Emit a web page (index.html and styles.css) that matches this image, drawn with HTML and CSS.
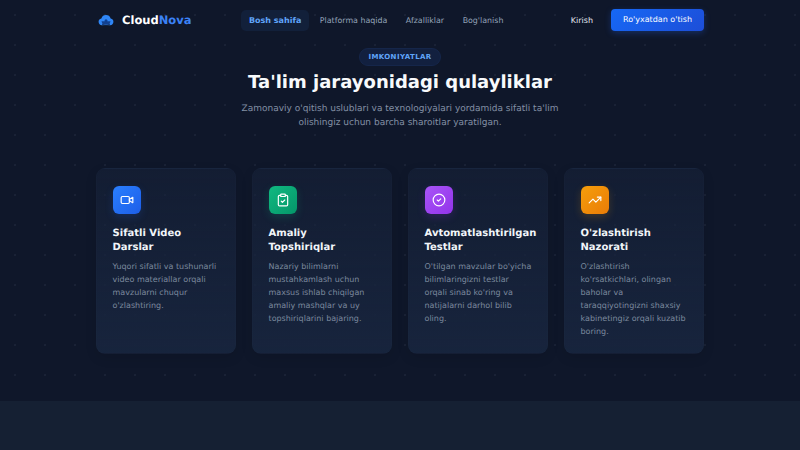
FILE: index.html
```html
<!DOCTYPE html>
<html lang="uz">
<head>
  <meta charset="UTF-8" />
  <meta name="viewport" content="width=device-width, initial-scale=1.0" />
  <title>CloudNova</title>
  <link rel="stylesheet" href="styles.css">
</head>
<body>
  <div class="page">
    <header class="navbar">
      <a class="logo" href="#">
        <svg class="logo-icon" viewBox="0 0 24 24" width="18" height="18">
          <path fill="#2f86f6" d="M6.5 19a4.6 4.6 0 0 1-.7-9.1 6.5 6.5 0 0 1 12.4 0 4.6 4.6 0 0 1-.7 9.1z"/>
          <path fill="#12408f" d="M6 13.5h12l-1.5 4.5h-9z"/>
          <circle cx="12" cy="13" r="2" fill="#0b3f94"/>
          <path fill="none" stroke="#0d1628" stroke-width="1" d="M7 18c3 1.5 7 1.5 10 0"/>
        </svg>
        <span>Cloud<em>Nova</em></span>
      </a>
      <nav class="menu">
        <a class="menu-item active" href="#">Bosh sahifa</a>
        <a class="menu-item" href="#">Platforma haqida</a>
        <a class="menu-item" href="#">Afzalliklar</a>
        <a class="menu-item" href="#">Bog'lanish</a>
      </nav>
      <div class="actions">
        <a class="login" href="#">Kirish</a>
        <a class="signup" href="#">Ro'yxatdan o'tish</a>
      </div>
    </header>

    <section class="features">
      <div class="features-head">
        <span class="badge">IMKONIYATLAR</span>
        <h1>Ta'lim jarayonidagi qulayliklar</h1>
        <p>Zamonaviy o'qitish uslublari va texnologiyalari yordamida sifatli ta'lim olishingiz uchun barcha sharoitlar yaratilgan.</p>
      </div>

      <div class="cards">
        <div class="card">
          <div class="icon icon-blue">
            <svg viewBox="0 0 24 24" width="14" height="14"><path d="m16 13 5.2 3.5a.5.5 0 0 0 .8-.4V7.9a.5.5 0 0 0-.8-.4L16 11"/><rect x="2" y="6" width="14" height="12" rx="2"/></svg>
          </div>
          <h3>Sifatli Video Darslar</h3>
          <p>Yuqori sifatli va tushunarli video materiallar orqali mavzularni chuqur o'zlashtiring.</p>
        </div>
        <div class="card">
          <div class="icon icon-green">
            <svg viewBox="0 0 24 24" width="14" height="14"><rect x="8" y="2" width="8" height="4" rx="1"/><path d="M16 4h2a2 2 0 0 1 2 2v14a2 2 0 0 1-2 2H6a2 2 0 0 1-2-2V6a2 2 0 0 1 2-2h2"/><path d="m9 14 2 2 4-4"/></svg>
          </div>
          <h3>Amaliy Topshiriqlar</h3>
          <p>Nazariy bilimlarni mustahkamlash uchun maxsus ishlab chiqilgan amaliy mashqlar va uy topshiriqlarini bajaring.</p>
        </div>
        <div class="card">
          <div class="icon icon-purple">
            <svg viewBox="0 0 24 24" width="14" height="14"><circle cx="12" cy="12" r="10"/><path d="m9 12 2 2 4-4"/></svg>
          </div>
          <h3>Avtomatlashtirilgan Testlar</h3>
          <p>O'tilgan mavzular bo'yicha bilimlaringizni testlar orqali sinab ko'ring va natijalarni darhol bilib oling.</p>
        </div>
        <div class="card">
          <div class="icon icon-orange">
            <svg viewBox="0 0 24 24" width="14" height="14"><path d="m22 7-8.5 8.5-5-5L2 17"/><path d="M16 7h6v6"/></svg>
          </div>
          <h3>O'zlashtirish Nazorati</h3>
          <p>O'zlashtirish ko'rsatkichlari, olingan baholar va taraqqiyotingizni shaxsiy kabinetingiz orqali kuzatib boring.</p>
        </div>
      </div>
    </section>

    <div class="band"></div>
  </div>
</body>
</html>
```

FILE: styles.css
```css
* {
  box-sizing: border-box;
}

html, body {
  height: 100%;
}

body {
  margin: 0;
  overflow: hidden;
  font-family: "DejaVu Sans", sans-serif;
  text-rendering: geometricPrecision;
  background-color: #0f172a;
  color: white;
}

a {
  text-decoration: none;
}

.page {
  height: 450px;
  display: flex;
  flex-direction: column;
  background-image: radial-gradient(circle at center, rgba(148, 163, 184, 0.08) 1px, transparent 1.5px);
  background-size: 30px 30px;
}

.navbar {
  height: 40px;
  margin: 0 96px;
  display: flex;
  align-items: center;
}

.logo {
  width: 145px;
  padding-left: 1px;
  display: flex;
  align-items: center;
  gap: 7px;
  font-size: 11.5px;
  font-weight: bold;
  color: white;
}

.logo em {
  font-style: normal;
  color: #3b82f6;
}

.menu {
  flex: 1;
  display: flex;
  gap: 2.5px;
}

.menu-item {
  padding: 5px 8px;
  border-radius: 5px;
  font-size: 7.9px;
  line-height: 11px;
  color: #94a3b8;
}

.menu-item.active {
  background-color: #12203a;
  color: #60a5fa;
  font-size: 8px;
  font-weight: bold;
}

.actions {
  display: flex;
  align-items: center;
  gap: 18px;
}

.login {
  font-size: 8px;
  color: #e2e8f0;
}

.signup {
  width: 93px;
  padding: 5px 0 6px;
  text-align: center;
  border-radius: 4px;
  font-size: 8px;
  line-height: 11px;
  font-weight: 500;
  color: white;
  background: linear-gradient(135deg, #1668f5, #1d4ed8);
  box-shadow: 0 2px 6px rgba(37, 99, 235, 0.3);
}

.features {
  flex: 1;
  padding: 4px 96px 0;
}

.features-head {
  text-align: center;
}

.badge {
  display: inline-block;
  padding: 4px 8px;
  border-radius: 9px;
  background-color: #12203f;
  border: 1px solid #15264a;
  color: #60a5fa;
  font-size: 7px;
  line-height: 8px;
  font-weight: bold;
  letter-spacing: 0.4px;
}

.features-head h1 {
  margin: 5px 0 7px;
  font-size: 18px;
  line-height: 24px;
  color: #f8fafc;
}

.features-head p {
  width: 340px;
  margin: 0 auto;
  font-size: 9px;
  line-height: 14px;
  color: #8390a5;
}

.cards {
  margin-top: 38px;
  display: grid;
  grid-template-columns: repeat(4, minmax(0, 1fr));
  gap: 16px;
}

.card {
  height: 186px;
  padding: 17px 15px 17px 15.5px;
  border-radius: 9px;
  border: 1px solid rgba(51, 65, 85, 0.06);
  background: linear-gradient(180deg, rgba(24, 36, 60, 0.5), rgba(24, 37, 62, 0.95));
  box-shadow: 0 4px 12px rgba(0, 0, 0, 0.1);
}

.icon {
  width: 28px;
  height: 28px;
  border-radius: 6px;
  display: flex;
  align-items: center;
  justify-content: center;
}

.icon svg {
  fill: none;
  stroke: white;
  stroke-width: 2;
  stroke-linecap: round;
  stroke-linejoin: round;
}

.icon-blue {
  background: linear-gradient(135deg, #2a7fff, #1d5ee8);
  box-shadow: 0 3px 8px rgba(37, 99, 235, 0.2);
}

.icon-green {
  background: linear-gradient(135deg, #10b981, #059669);
  box-shadow: 0 3px 8px rgba(16, 185, 129, 0.2);
}

.icon-purple {
  background: linear-gradient(135deg, #a855f7, #9333ea);
  box-shadow: 0 3px 8px rgba(147, 51, 234, 0.2);
}

.icon-orange {
  background: linear-gradient(135deg, #f59e0b, #ea7c07);
  box-shadow: 0 3px 8px rgba(245, 158, 11, 0.2);
}

.card h3 {
  margin: 13px 0 5px;
  font-size: 10px;
  line-height: 14px;
  color: #f1f5f9;
}

.card p {
  margin: 0;
  font-size: 8px;
  line-height: 13px;
  color: #7c899e;
}

.band {
  height: 49px;
  background-color: #152033;
}
```
